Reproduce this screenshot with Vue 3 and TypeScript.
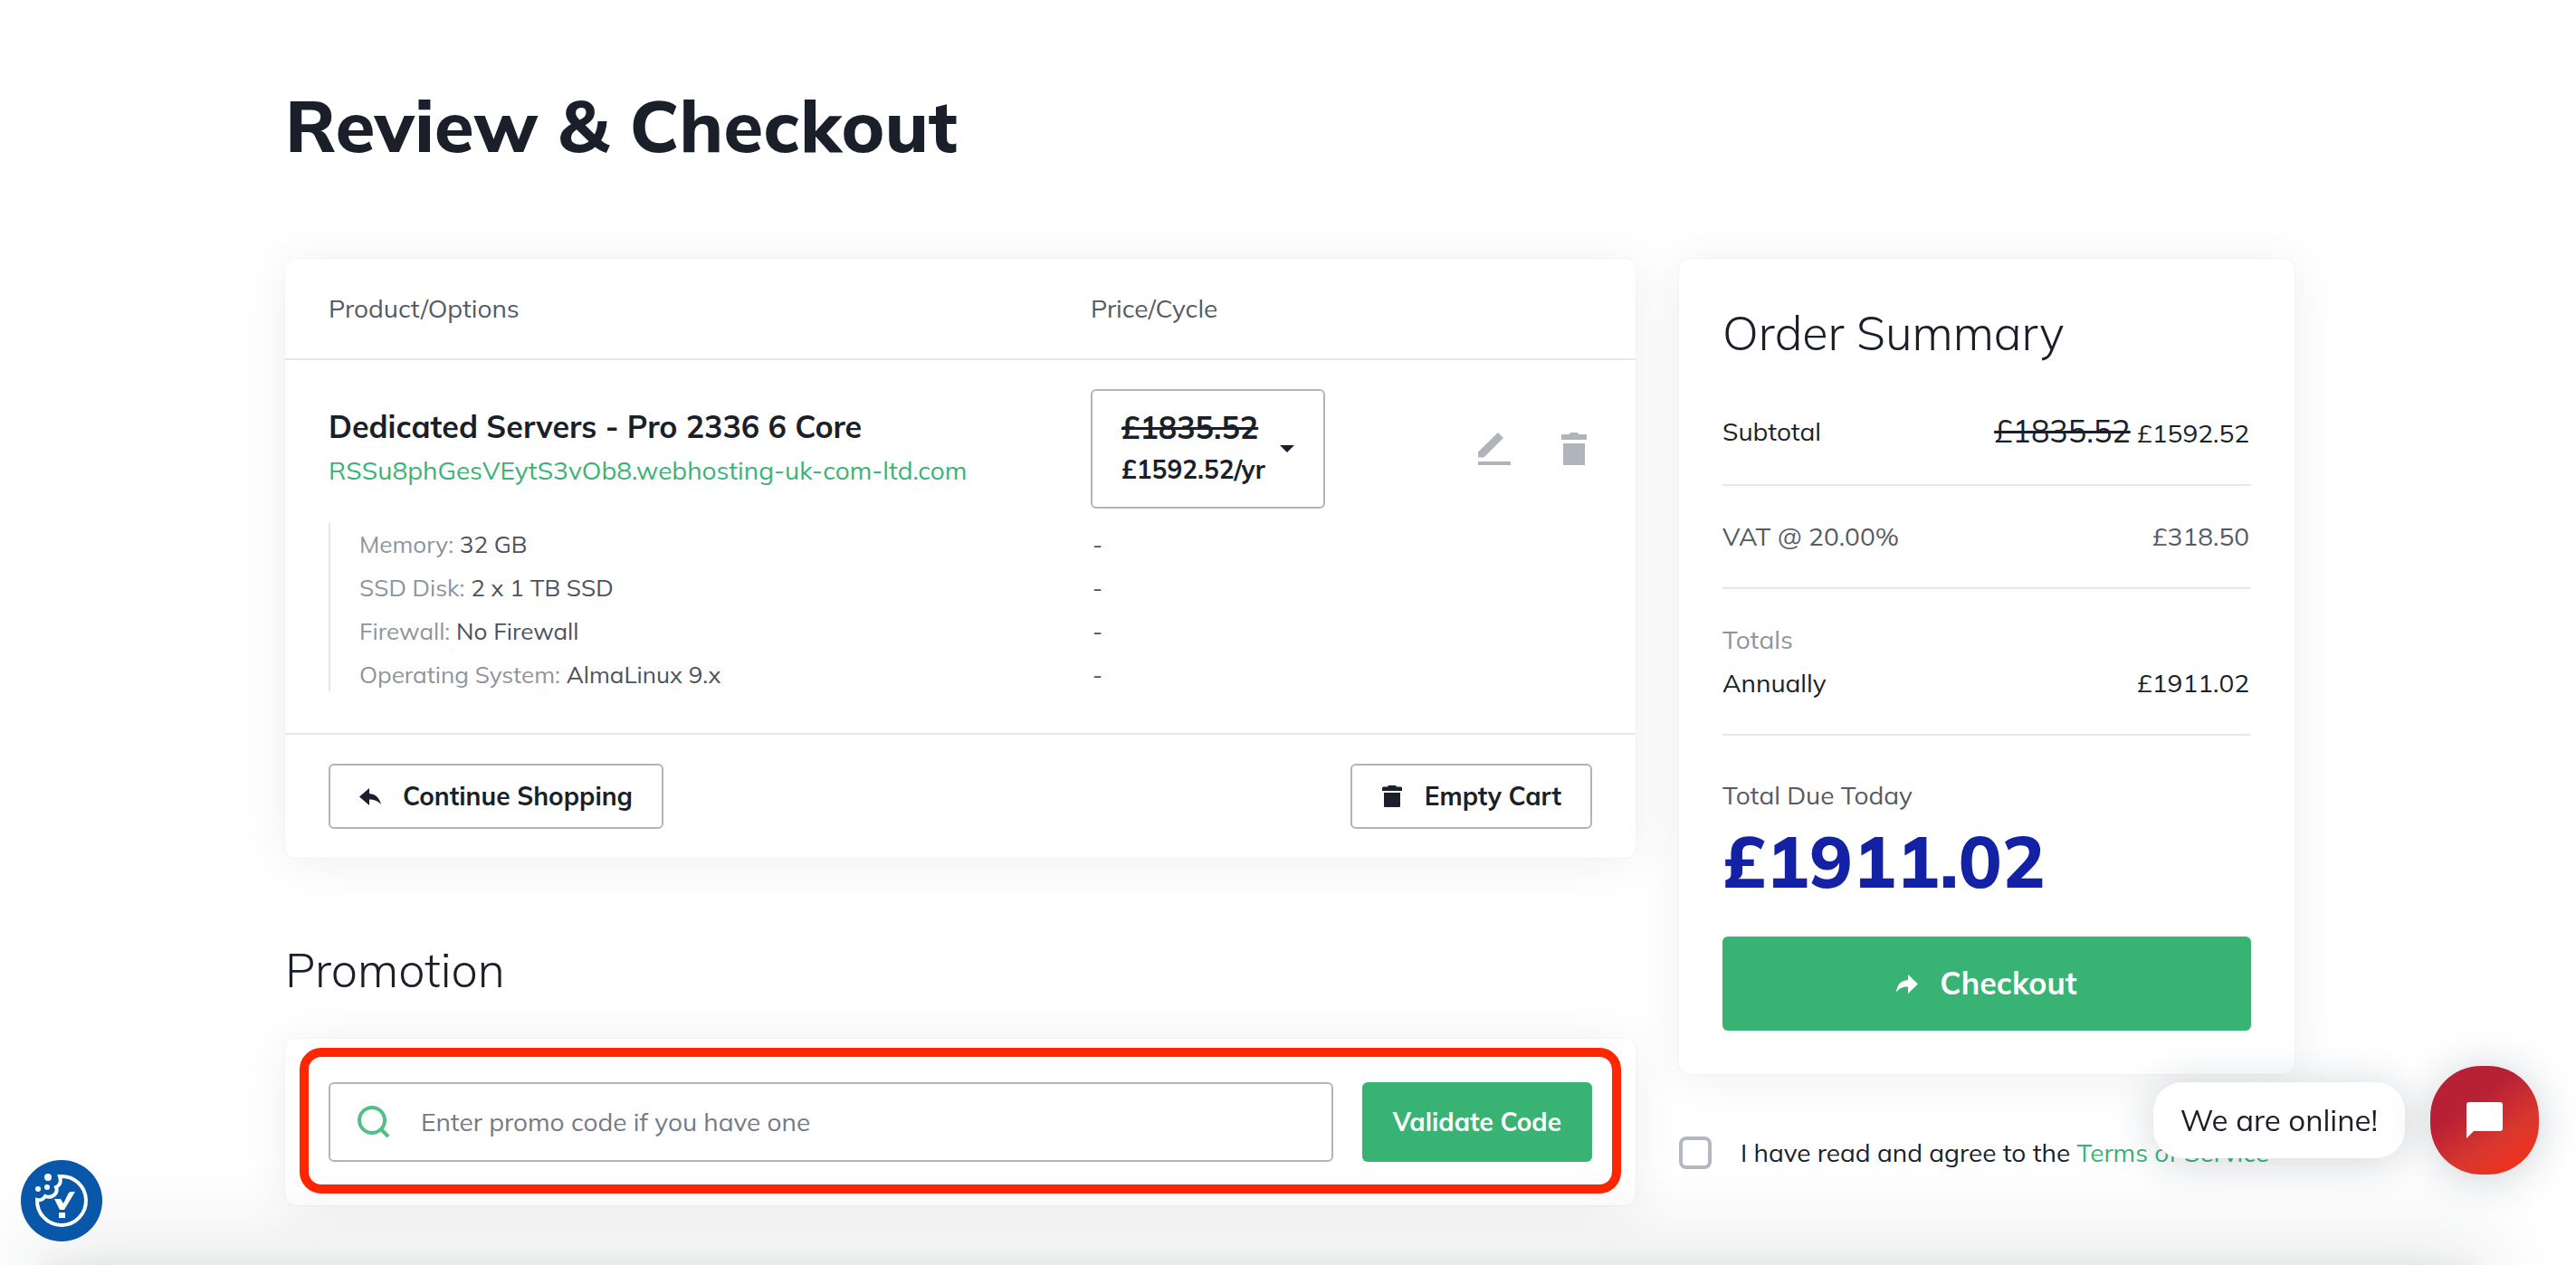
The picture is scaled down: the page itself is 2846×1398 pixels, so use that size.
<script setup lang="ts">
import { ref } from 'vue'

interface ProductOption {
  label: string
  value: string
  price: string
}

const options: ProductOption[] = [
  { label: 'Memory', value: '32 GB', price: '-' },
  { label: 'SSD Disk', value: '2 x 1 TB SSD', price: '-' },
  { label: 'Firewall', value: 'No Firewall', price: '-' },
  { label: 'Operating System', value: 'AlmaLinux 9.x', price: '-' },
]

const promoCode = ref('')
const agreed = ref(false)
</script>

<template>
  <div class="page">
    <main class="container">
      <h1>Review &amp; Checkout</h1>

      <div class="columns">
        <div class="cart">
          <section class="card">
            <table class="products">
              <colgroup>
                <col />
                <col class="col-price" />
                <col class="col-actions" />
              </colgroup>
              <thead>
                <tr>
                  <th scope="col">Product/Options</th>
                  <th scope="col">Price/Cycle</th>
                  <td></td>
                </tr>
              </thead>
              <tbody>
                <tr class="product">
                  <td>
                    <div class="name">Dedicated Servers - Pro 2336 6 Core</div>
                    <a class="host" href="#">RSSu8phGesVEytS3vOb8.webhosting-uk-com-ltd.com</a>
                  </td>
                  <td>
                    <button class="cycle" type="button" aria-haspopup="listbox">
                      <span class="amounts">
                        <s>£1835.52</s>
                        <span>£1592.52/yr</span>
                      </span>
                      <svg class="caret" viewBox="0 0 16 8" aria-hidden="true"><path d="M0 0h16L8 8z" /></svg>
                    </button>
                  </td>
                  <td>
                    <div class="actions">
                      <button type="button" aria-label="Edit">
                        <svg viewBox="0 0 24 24"><path d="M3 13.8 14 3l3 3L6.2 16.8H3zM3 19h18v2H3z" /></svg>
                      </button>
                      <button type="button" aria-label="Remove">
                        <svg viewBox="0 0 24 24"><path d="M5 4h4.3l.7-1h4l.7 1H19v3H5zM6 9h12v12H6z" /></svg>
                      </button>
                    </div>
                  </td>
                </tr>
                <tr v-for="option in options" :key="option.label" class="option-row">
                  <td>
                    <div class="option"><span>{{ option.label }}:</span> {{ option.value }}</div>
                  </td>
                  <td class="option-price">{{ option.price }}</td>
                  <td></td>
                </tr>
              </tbody>
            </table>
            <div class="card-footer">
              <button class="outline" type="button">
                <svg viewBox="0 0 24 24" aria-hidden="true">
                  <path d="M11 3v6c7 .6 11 4.500 13 12-4-4-7.500-5.400-13-5.400V22L0 12.500z" />
                </svg>
                Continue Shopping
              </button>
              <button class="outline" type="button">
                <svg viewBox="0 0 24 24" aria-hidden="true">
                  <path d="M1 3q0-1.500 1.500-1.500H7L8 0h8l1 1.500h4.500Q23 1.500 23 3v3H1zM3 8h18v15q0 1-1 1H4q-1 0-1-1z" />
                </svg>
                Empty Cart
              </button>
            </div>
          </section>

          <h2 class="promo-title">Promotion</h2>
          <form class="card promo" @submit.prevent>
            <div class="field">
              <svg viewBox="0 0 36 36" aria-hidden="true">
                <circle cx="16" cy="16" r="14" />
                <path d="m26 26 8 8" />
              </svg>
              <input v-model="promoCode" type="text" placeholder="Enter promo code if you have one" aria-label="Promo code" />
            </div>
            <button class="primary" type="submit">Validate Code</button>
            <div class="highlight"></div>
          </form>
        </div>

        <aside>
          <section class="card summary">
            <h2>Order Summary</h2>
            <dl>
              <div class="line first">
                <dt>Subtotal</dt>
                <dd><s>£1835.52</s> £1592.52</dd>
              </div>
              <div class="line vat">
                <dt>VAT @ 20.00%</dt>
                <dd>£318.50</dd>
              </div>
              <div class="line totals">
                <dt class="caption">Totals</dt>
                <dt>Annually</dt>
                <dd>£1911.02</dd>
              </div>
            </dl>
            <p class="due-label">Total Due Today</p>
            <p class="due">£1911.02</p>
            <button class="primary checkout" type="button">
              <svg viewBox="0 0 24 24" aria-hidden="true">
                <path d="M13 2v6C5 8.500 1 13 0 22c3-5 7-6.500 13-6.500V23l11-10.500z" />
              </svg>
              Checkout
            </button>
          </section>
          <div class="agree">
            <input id="agree" v-model="agreed" type="checkbox" />
            <label for="agree">I have read and agree to the <a href="#">Terms of Service</a></label>
          </div>
        </aside>
      </div>
    </main>

    <div class="bottom-shade"></div>

    <button class="cookie" type="button" aria-label="Cookie settings">
      <svg viewBox="0 0 90 90" aria-hidden="true">
        <path
          class="ring"
          d="M43 18a27 27 0 1 1-25 26c4 1 7-1 9-4 5 2 10 0 12-4 1-2 1-4 0-6 4-2 6-6 4-12z"
        />
        <circle cx="30" cy="19" r="4" />
        <circle cx="19" cy="32" r="3" />
        <circle cx="29" cy="30" r="3" />
        <path d="M37 43h7l3 5 5-10q1-3 4-3h4L48 55h-5zM42 58h7v6h-7z" />
      </svg>
    </button>

    <div class="chat">
      <div class="bubble">We are online!</div>
      <button type="button" aria-label="Open chat">
        <svg viewBox="0 0 40 40" aria-hidden="true">
          <path d="M3 0h34q3 0 3 3v26q0 3-3 3H8l-8 8V3q0-3 3-3z" />
        </svg>
      </button>
    </div>
  </div>
</template>

<style>
body {
  margin: 0;
  background: #fff;
}
</style>

<style scoped>
.page {
  box-sizing: border-box;
  min-height: 100vh;
  padding-left: 4px;
  overflow: hidden;
  font-family: Mulish, Lato, sans-serif;
  font-size: 28px;
  line-height: 40px;
  color: #1a1f29;
}
.page *,
.page *::before {
  box-sizing: border-box;
}
button,
input {
  font: inherit;
  color: inherit;
  margin: 0;
}
button {
  cursor: pointer;
}
a {
  color: #39b374;
  text-decoration: none;
}
h1,
h2,
p,
dl,
dd {
  margin: 0;
}
.container {
  max-width: 2220px;
  margin: 0 auto;
  padding-top: 90px;
}
h1 {
  font-size: 80px;
  line-height: 96px;
  font-weight: 800;
  margin-bottom: 100px;
}
h2 {
  font-size: 52px;
  line-height: 64px;
  font-weight: 300;
}
.columns {
  display: grid;
  grid-template-columns: minmax(0, 1fr) 680px;
  gap: 48px;
}
.card {
  background: #fff;
  border-radius: 12px;
  box-shadow: 0 0 2px rgba(0, 0, 0, 0.08), 0 4px 56px rgba(20, 30, 30, 0.07);
}

.products {
  width: 100%;
  table-layout: fixed;
  border-collapse: collapse;
}
.col-price {
  width: 400px;
}
.col-actions {
  width: 202px;
}
.products th,
.products td {
  padding: 0;
  text-align: left;
  font-weight: 400;
}
.products th:first-child,
.products td:first-child {
  padding-left: 48px;
}
thead tr {
  height: 111px;
  border-bottom: 2px solid #e4e8ea;
  color: #555a65;
}
.product td {
  height: 180px;
  padding-top: 32px;
  padding-bottom: 16px;
  vertical-align: top;
}
.name {
  margin-top: 18px;
  font-size: 34px;
  line-height: 48px;
  font-weight: 700;
}
.host {
  display: block;
  line-height: 48px;
}
.cycle {
  display: flex;
  align-items: center;
  gap: 16px;
  height: 132px;
  padding: 0 32px;
  background: #fff;
  border: 2px solid #b0b5bc;
  border-radius: 6px;
  font-weight: 700;
  text-align: left;
}
.amounts {
  display: flex;
  flex-direction: column;
  line-height: 46px;
}
s {
  font-size: 34px;
}
.caret {
  width: 16px;
  height: 8px;
  fill: #1a1f29;
}
.actions {
  display: flex;
  gap: 40px;
  justify-content: flex-end;
  padding: 42px 44px 0 0;
}
.actions button {
  width: 48px;
  height: 48px;
  padding: 0;
  border: 0;
  background: none;
}
.actions svg {
  display: block;
  fill: #b0b4bc;
}
.option-row td {
  height: 48px;
  font-size: 26px;
  line-height: 48px;
  vertical-align: top;
  color: #4d525d;
}
.products .option-price {
  padding-left: 2px;
}
.option {
  padding-left: 32px;
  border-left: 2px solid #e4e8ea;
}
.option-row:last-child .option {
  height: 42px;
}
.option span {
  color: #8f939c;
}
.card-footer {
  display: flex;
  justify-content: space-between;
  margin-top: 40px;
  padding: 32px 48px;
  border-top: 2px solid #e4e8ea;
}
.outline {
  display: flex;
  align-items: center;
  gap: 24px;
  height: 72px;
  padding: 0 32px;
  background: #fff;
  border: 2px solid #b0b5bc;
  border-radius: 6px;
  font-weight: 700;
}
.outline svg {
  width: 24px;
  height: 24px;
  fill: #1a1f29;
}

.promo-title {
  margin: 92px 0 44px;
}
.promo {
  position: relative;
  display: flex;
  gap: 32px;
  padding: 48px;
}
.field {
  flex: 1;
  display: flex;
  align-items: center;
  height: 88px;
  padding: 0 30px;
  gap: 34px;
  border: 2px solid #b0b5bf;
  border-radius: 6px;
}
.field svg {
  width: 36px;
  height: 36px;
  fill: none;
  stroke: #52bf87;
  stroke-width: 4;
}
.field input {
  flex: 1;
  min-width: 0;
  padding: 0;
  border: 0;
  outline: 0;
  background: none;
}
.field input::placeholder {
  color: #757a86;
  opacity: 1;
}
.primary {
  padding: 0 34px;
  border: 0;
  border-radius: 6px;
  background: #39b374;
  color: #fff;
  font-weight: 700;
}
.highlight {
  position: absolute;
  inset: 10px 16px 13px;
  border: 10px solid #ff2600;
  border-radius: 24px;
  pointer-events: none;
}

.summary {
  padding: 50px 48px 48px;
}
.line {
  display: flex;
  flex-wrap: wrap;
  justify-content: space-between;
  padding: 36px 0;
  border-bottom: 2px solid #e4e8ec;
}
.line dd {
  padding-right: 2px;
}
.line.first {
  margin-top: 21px;
}
.vat {
  color: #555a65;
}
.totals {
  row-gap: 8px;
}
.caption {
  width: 100%;
  color: #8f939c;
}
.due-label {
  margin-top: 46px;
  color: #555a65;
}
.due {
  margin: 4px 0 36px;
  font-size: 80px;
  line-height: 96px;
  font-weight: 800;
  color: #1322a5;
}
.checkout {
  display: flex;
  align-items: center;
  justify-content: center;
  gap: 24px;
  width: 100%;
  height: 104px;
  font-size: 34px;
}
.checkout svg {
  width: 24px;
  height: 24px;
  fill: #fff;
}
.agree {
  display: flex;
  align-items: center;
  gap: 32px;
  margin-top: 67px;
}
.agree input {
  appearance: none;
  width: 36px;
  height: 36px;
  border: 4px solid #b3b7c1;
  border-radius: 8px;
  background: #fff;
}

.bottom-shade {
  position: fixed;
  left: 48px;
  right: 112px;
  bottom: -20px;
  height: 20px;
  box-shadow: 0 0 24px rgba(30, 45, 40, 0.08), 0 0 96px 16px rgba(30, 45, 40, 0.16);
}
.cookie {
  position: fixed;
  left: 23px;
  bottom: 26px;
  width: 90px;
  height: 90px;
  padding: 0;
  border: 0;
  border-radius: 50%;
  background: #0857a8;
}
.cookie svg {
  display: block;
  fill: #fff;
}
.cookie .ring {
  fill: none;
  stroke: #fff;
  stroke-width: 4;
}
.chat {
  position: fixed;
  right: 41px;
  bottom: 100px;
  display: flex;
  align-items: center;
  gap: 28px;
}
.bubble {
  padding: 20px 30px;
  border-radius: 32px;
  background: #fff;
  box-shadow: 0 4px 48px rgba(20, 40, 60, 0.2);
  font-size: 33px;
  line-height: 44px;
}
.chat button {
  display: grid;
  place-items: center;
  width: 120px;
  height: 120px;
  padding: 0;
  border: 0;
  border-radius: 56px;
  background: linear-gradient(145deg, #b82035 35%, #d8372e 65%, #fb2d16);
  box-shadow: 0 4px 48px rgba(20, 40, 60, 0.22);
}
.chat svg {
  width: 40px;
  height: 40px;
  fill: #fff;
}
</style>
